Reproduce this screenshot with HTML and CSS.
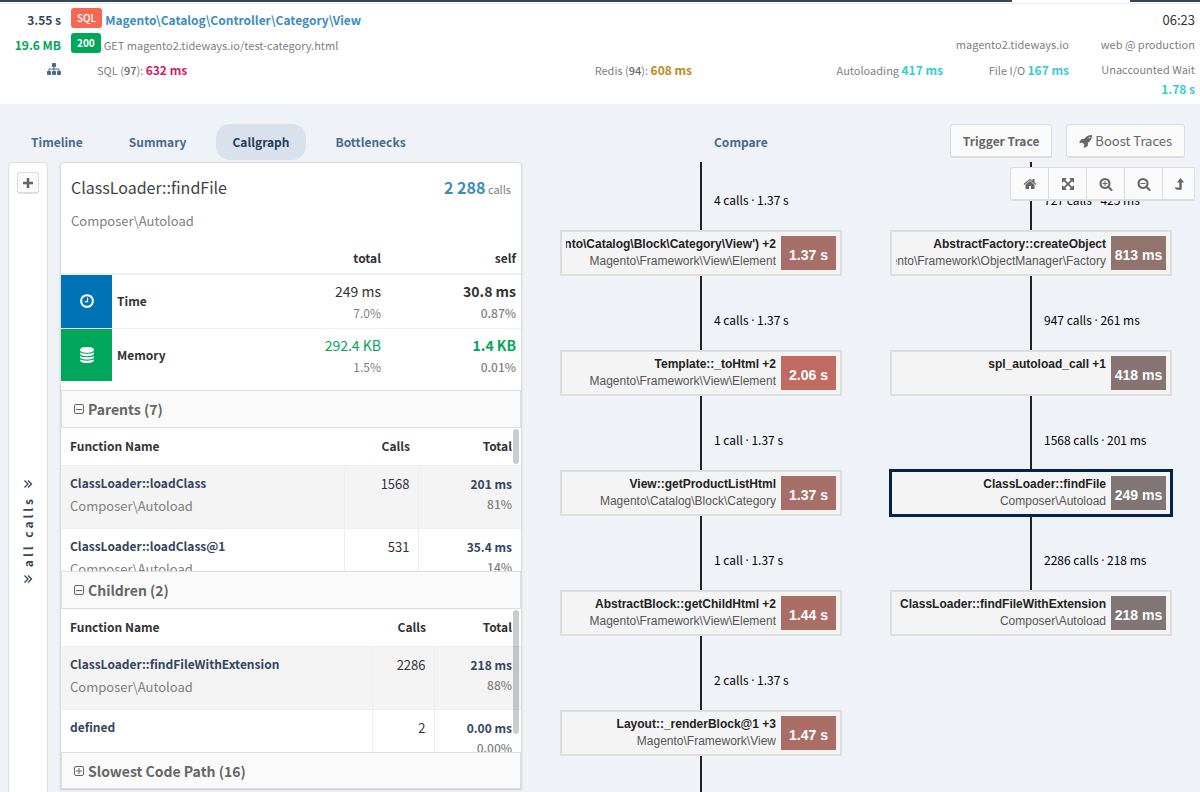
FILE: index.html
```html
<!DOCTYPE html>
<html lang="en">
<head>
<meta charset="utf-8">
<title>Callgraph - Magento\Catalog\Controller\Category\View</title>
<link rel="stylesheet" href="styles.css">
</head>
<body>
<svg class="sprite" aria-hidden="true">
  <symbol id="i-home" viewBox="0 0 1792 1792"><path d="M1472 992v480q0 26-19 45t-45 19h-384v-384h-256v384h-384q-26 0-45-19t-19-45v-480q0-1 .5-3t.5-3l575-474 575 474q1 2 1 6zm223-69l-62 74q-8 9-21 11h-3q-13 0-21-7l-692-577-692 577q-12 8-24 7-13-2-21-11l-62-74q-8-10-7-23.5t11-21.5l719-599q32-26 76-26t76 26l244 204v-195q0-14 9-23t23-9h192q14 0 23 9t9 23v408l219 182q10 8 11 21.5t-7 23.5z"/></symbol>
  <symbol id="i-expand" viewBox="0 0 1792 1792"><path d="M1411 541l-355 355 355 355 144-144q29-31 70-14 39 17 39 59v448q0 26-19 45t-45 19h-448q-42 0-59-40-17-39 14-69l144-144-355-355-355 355 144 144q31 30 14 69-17 40-59 40h-448q-26 0-45-19t-19-45v-448q0-42 40-59 39-17 69 14l144 144 355-355-355-355-144 144q-19 19-45 19-12 0-24-5-40-17-40-59v-448q0-26 19-45t45-19h448q42 0 59 40 17 39-14 69l-144 144 355 355 355-355-144-144q-31-30-14-69 17-40 59-40h448q26 0 45 19t19 45v448q0 42-39 59-13 5-25 5-26 0-45-19z"/></symbol>
  <symbol id="i-zoomin" viewBox="0 0 1792 1792"><path d="M1088 800v64q0 13-9.5 22.5t-22.5 9.5h-224v224q0 13-9.5 22.5t-22.5 9.5h-64q-13 0-22.5-9.5t-9.5-22.5v-224h-224q-13 0-22.5-9.5t-9.5-22.5v-64q0-13 9.5-22.5t22.5-9.5h224v-224q0-13 9.5-22.5t22.5-9.5h64q13 0 22.5 9.5t9.5 22.5v224h224q13 0 22.5 9.5t9.5 22.5zm128 32q0-185-131.5-316.5t-316.5-131.5-316.5 131.5-131.5 316.5 131.5 316.5 316.5 131.5 316.5-131.5 131.5-316.5zm512 832q0 53-37.5 90.5t-90.5 37.5q-54 0-90-38l-343-342q-179 124-399 124-143 0-273.5-55.5t-225-150-150-225-55.5-273.5 55.5-273.5 150-225 225-150 273.5-55.5 273.5 55.5 225 150 150 225 55.5 273.5q0 220-124 399l343 343q37 37 37 90z"/></symbol>
  <symbol id="i-zoomout" viewBox="0 0 1792 1792"><path d="M1088 800v64q0 13-9.5 22.5t-22.5 9.5h-576q-13 0-22.5-9.5t-9.5-22.5v-64q0-13 9.5-22.5t22.5-9.5h576q13 0 22.5 9.5t9.5 22.5zm128 32q0-185-131.5-316.5t-316.5-131.5-316.5 131.5-131.5 316.5 131.5 316.5 316.5 131.5 316.5-131.5 131.5-316.5zm512 832q0 53-37.5 90.5t-90.5 37.5q-54 0-90-38l-343-342q-179 124-399 124-143 0-273.5-55.5t-225-150-150-225-55.5-273.5 55.5-273.5 150-225 225-150 273.5-55.5 273.5 55.5 225 150 150 225 55.5 273.5q0 220-124 399l343 343q37 37 37 90z"/></symbol>
  <symbol id="i-levelup" viewBox="0 0 14 14"><path d="M8.500 1 12.200 5.400H9.700v7.400H4.400L2.600 10.600h4.700V5.400H4.800z"/></symbol>
  <symbol id="i-rocket" viewBox="0 0 1792 1792"><path d="M1440 448q0-40-28-68t-68-28-68 28-28 68 28 68 68 28 68-28 28-68zm224-288q0 249-75.5 430.5t-253.5 360.5q-81 80-195 176l-20 379q-2 16-16 26l-384 224q-7 4-16 4-12 0-23-9l-64-64q-13-14-8-32l85-276-281-281-276 85q-3 1-9 1-14 0-23-9l-64-64q-17-19-5-39l224-384q10-14 26-16l379-20q96-114 176-195 188-187 358-258t431-71q14 0 24 9.5t10 22.5z"/></symbol>
  <symbol id="i-sitemap" viewBox="0 0 1792 1792"><path d="M1792 1248v320q0 40-28 68t-68 28h-320q-40 0-68-28t-28-68v-320q0-40 28-68t68-28h96v-192h-512v192h96q40 0 68 28t28 68v320q0 40-28 68t-68 28h-320q-40 0-68-28t-28-68v-320q0-40 28-68t68-28h96v-192h-512v192h96q40 0 68 28t28 68v320q0 40-28 68t-68 28h-320q-40 0-68-28t-28-68v-320q0-40 28-68t68-28h96v-192q0-52 38-90t90-38h512v-192h-96q-40 0-68-28t-28-68v-320q0-40 28-68t68-28h320q40 0 68 28t28 68v320q0 40-28 68t-68 28h-96v192h512q52 0 90 38t38 90v192h96q40 0 68 28t28 68z"/></symbol>
  <symbol id="i-clock" viewBox="0 0 1792 1792"><path d="M1024 544v448q0 14-9 23t-23 9h-320q-14 0-23-9t-9-23v-64q0-14 9-23t23-9h224v-352q0-14 9-23t23-9h64q14 0 23 9t9 23zm416 352q0-148-73-273t-198-198-273-73-273 73-198 198-73 273 73 273 198 198 273 73 273-73 198-198 73-273zm224 0q0 209-103 385.5t-279.5 279.5-385.5 103-385.5-103-279.5-279.5-103-385.5 103-385.5 279.5-279.5 385.5-103 385.5 103 279.5 279.5 103 385.5z"/></symbol>
  <symbol id="i-database" viewBox="0 0 1792 1792"><path d="M896 768q237 0 443-43t325-127v170q0 69-103 128t-280 93.5-385 34.5-385-34.5-280-93.5-103-128v-170q119 84 325 127t443 43zm0 768q237 0 443-43t325-127v170q0 69-103 128t-280 93.5-385 34.5-385-34.5-280-93.5-103-128v-170q119 84 325 127t443 43zm0-384q237 0 443-43t325-127v170q0 69-103 128t-280 93.5-385 34.5-385-34.5-280-93.5-103-128v-170q119 84 325 127t443 43zm0-1152q208 0 385 34.5t280 93.5 103 128v128q0 69-103 128t-280 93.5-385 34.5-385-34.5-280-93.5-103-128v-128q0-69 103-128t280-93.5 385-34.5z"/></symbol>
  <symbol id="i-plus" viewBox="0 0 12 12"><path d="M4.700 1h2.600v3.700H11v2.600H7.300V11H4.700V7.300H1V4.700h3.700z"/></symbol>
  <symbol id="i-chevrons" viewBox="0 0 10 10"><path d="M1.500 1.500 5 5 1.500 8.500M5 1.500 8.500 5 5 8.500" fill="none" stroke="currentColor" stroke-width="1.300"/></symbol>
  <symbol id="i-minusbox" viewBox="0 0 10 10"><path d="M2 .5h6Q9.500.5 9.500 2v6Q9.500 9.500 8 9.500H2Q.5 9.500.5 8V2Q.5.5 2 .5zM2 5.500h6" fill="none" stroke="currentColor"/></symbol>
  <symbol id="i-plusbox" viewBox="0 0 10 10"><path d="M2 .5h6Q9.500.5 9.500 2v6Q9.500 9.500 8 9.500H2Q.5 9.500.5 8V2Q.5.5 2 .5zM2 5h6M5 2v6" fill="none" stroke="currentColor"/></symbol>
</svg>

<div class="topbar"><span class="topbar-dark"></span><span class="topbar-gap"></span><span class="topbar-end"></span></div>
<header class="trace">
  <div class="cell num">3.55 s</div>
  <div class="cell"><span class="tag tag-sql">SQL</span><a class="trace-title" href="#">Magento\Catalog\Controller\Category\View</a></div>
  <div></div>
  <div class="cell right clock">06:23</div>

  <div class="cell num green">19.6 MB</div>
  <div class="cell"><span class="tag tag-ok">200</span><span class="small">GET magento2.tideways.io/test-category.html</span></div>
  <div class="cell right small">magento2.tideways.io</div>
  <div class="cell right small">web @ production</div>

  <div class="cell num"><svg class="icon sitemap"><use href="#i-sitemap"/></svg></div>
  <div class="metrics">
    <div class="small">SQL (<b>97</b>): <strong class="pink">632 ms</strong></div>
    <div class="metrics-rest">
      <div class="small">Redis (<b>94</b>): <strong class="gold">608 ms</strong></div>
      <div class="small">Autoloading <strong class="teal">417 ms</strong></div>
    </div>
  </div>
  <div class="cell right small">File I/O <strong class="teal">167 ms</strong></div>
  <div class="cell right small wait">Unaccounted Wait <strong class="teal">1.78 s</strong></div>
</header>

<div class="tabbar">
  <nav class="tabs">
    <a class="tab" href="#">Timeline</a>
    <a class="tab" href="#">Summary</a>
    <a class="tab active" href="#">Callgraph</a>
    <a class="tab" href="#">Bottlenecks</a>
  </nav>
  <div class="tab-actions">
    <a class="tab" href="#">Compare</a>
    <div class="buttons">
      <button class="btn strong">Trigger Trace</button>
      <button class="btn"><svg class="icon"><use href="#i-rocket"/></svg>Boost Traces</button>
    </div>
  </div>
</div>

<main class="content">
  <aside class="rail">
    <button class="rail-add" aria-label="Add"><svg><use href="#i-plus"/></svg></button>
    <div class="rail-label">
      <svg><use href="#i-chevrons"/></svg>
      <span>all calls</span>
      <svg><use href="#i-chevrons"/></svg>
    </div>
  </aside>

  <section class="panel">
    <div class="panel-head">
      <h1>ClassLoader::findFile</h1>
      <div class="count"><strong>2 288</strong> calls</div>
    </div>
    <div class="namespace">Composer\Autoload</div>
    <table class="totals">
      <thead><tr><th></th><th></th><th>total</th><th>self</th></tr></thead>
      <tbody>
        <tr><td class="tile blue"><svg><use href="#i-clock"/></svg></td><th scope="row">Time</th><td>249 ms<small>7.0%</small></td><td class="self">30.8 ms<small>0.87%</small></td></tr>
        <tr class="mem"><td class="tile greenbg"><svg><use href="#i-database"/></svg></td><th scope="row">Memory</th><td>292.4 KB<small>1.5%</small></td><td class="self">1.4 KB<small>0.01%</small></td></tr>
      </tbody>
    </table>

    <h2><svg><use href="#i-minusbox"/></svg>Parents (7)</h2>
    <div class="list">
      <table class="calls parents">
        <thead><tr><th>Function Name</th><th>Calls</th><th>Total</th></tr></thead>
        <tbody>
          <tr><td><a href="#">ClassLoader::loadClass</a><span>Composer\Autoload</span></td><td>1568</td><td><b>201 ms</b><small>81%</small></td></tr>
          <tr><td><a href="#">ClassLoader::loadClass@1</a><span>Composer\Autoload</span></td><td>531</td><td><b>35.4 ms</b><small>14%</small></td></tr>
        </tbody>
      </table>
      <i class="thumb thumb-short"></i>
    </div>

    <h2><svg><use href="#i-minusbox"/></svg>Children (2)</h2>
    <div class="list">
      <table class="calls children">
        <thead><tr><th>Function Name</th><th>Calls</th><th>Total</th></tr></thead>
        <tbody>
          <tr><td><a href="#">ClassLoader::findFileWithExtension</a><span>Composer\Autoload</span></td><td>2286</td><td><b>218 ms</b><small>88%</small></td></tr>
          <tr><td><a href="#">defined</a></td><td>2</td><td><b>0.00 ms</b><small>0.00%</small></td></tr>
        </tbody>
      </table>
      <i class="thumb thumb-long"></i>
    </div>

    <h2 class="last"><svg><use href="#i-plusbox"/></svg>Slowest Code Path (16)</h2>
  </section>

  <section class="graph">
    <div class="lane">
      <div class="edge first">4 calls <i>·</i> 1.37 s</div>
      <div class="node"><div class="fn"><b>Block\Magento\Catalog\Block\Category\View') +2</b><span>Magento\Framework\View\Element</span></div><em class="h3">1.37 s</em></div>
      <div class="edge">4 calls <i>·</i> 1.37 s</div>
      <div class="node"><div class="fn"><b>Template::_toHtml +2</b><span>Magento\Framework\View\Element</span></div><em class="h5">2.06 s</em></div>
      <div class="edge">1 call <i>·</i> 1.37 s</div>
      <div class="node"><div class="fn"><b>View::getProductListHtml</b><span>Magento\Catalog\Block\Category</span></div><em class="h3">1.37 s</em></div>
      <div class="edge">1 call <i>·</i> 1.37 s</div>
      <div class="node"><div class="fn"><b>AbstractBlock::getChildHtml +2</b><span>Magento\Framework\View\Element</span></div><em class="h4">1.44 s</em></div>
      <div class="edge">2 calls <i>·</i> 1.37 s</div>
      <div class="node"><div class="fn"><b>Layout::_renderBlock@1 +3</b><span>Magento\Framework\View</span></div><em class="h4">1.47 s</em></div>
      <div class="edge"></div>
    </div>
    <div class="lane">
      <div class="edge first">727 calls <i>·</i> 425 ms</div>
      <div class="node"><div class="fn"><b>AbstractFactory::createObject</b><span>Magento\Framework\ObjectManager\Factory</span></div><em class="h2">813 ms</em></div>
      <div class="edge">947 calls <i>·</i> 261 ms</div>
      <div class="node"><div class="fn"><b>spl_autoload_call +1</b></div><em class="h1">418 ms</em></div>
      <div class="edge">1568 calls <i>·</i> 201 ms</div>
      <div class="node selected"><div class="fn"><b>ClassLoader::findFile</b><span>Composer\Autoload</span></div><em class="h0">249 ms</em></div>
      <div class="edge">2286 calls <i>·</i> 218 ms</div>
      <div class="node"><div class="fn"><b>ClassLoader::findFileWithExtension</b><span>Composer\Autoload</span></div><em class="h0">218 ms</em></div>
    </div>
    <div class="toolbar">
      <button aria-label="Home"><svg><use href="#i-home"/></svg></button>
      <button aria-label="Fit"><svg><use href="#i-expand"/></svg></button>
      <button aria-label="Zoom in"><svg><use href="#i-zoomin"/></svg></button>
      <button aria-label="Zoom out"><svg><use href="#i-zoomout"/></svg></button>
      <button aria-label="Up"><svg><use href="#i-levelup"/></svg></button>
    </div>
  </section>
</main>
</body>
</html>
```
FILE: styles.css
```css
* { box-sizing: border-box; }
body {
  margin: 0;
  height: 100vh;
  overflow: hidden;
  display: flex;
  flex-direction: column;
  background: #eff3f8;
  color: #333;
  font: 13px/20px "Noto Sans CJK SC", "Noto Sans", sans-serif;
}
a { color: inherit; text-decoration: none; }
svg { fill: currentColor; display: block; }
button { font: inherit; color: inherit; }
h1, h2 { margin: 0; font-weight: 400; }
.sprite { position: absolute; width: 0; height: 0; }

.topbar { display: flex; height: 4px; flex: none; background: #fff; border-bottom: 1px solid #eee; }
.topbar span { height: 2px; }
.topbar-dark { flex: 1; background: #34455e; }
.topbar-gap { width: 118px; }
.topbar-end { width: 70px; background: #34455e; }

.trace {
  flex: none;
  display: grid;
  grid-template-columns: 61px minmax(0, 1fr) 126px 126px;
  grid-template-rows: 25px 25px auto;
  padding: 3px 5px 5px 0;
  background: #fff;
}
.cell { line-height: 25px; white-space: nowrap; }
.cell:nth-child(4n + 2), .metrics { padding-left: 10px; }
.num { font-size: 12px; font-weight: 700; text-align: right; color: #34455e; }
.green { color: #00a65a; }
.right { text-align: right; }
.small { font-size: 11px; color: #808080; white-space: nowrap; }
.small strong { font-size: 12px; }
.small b { font-weight: 500; color: #666; }
.clock { color: #333; }
.wait { line-height: 20px; padding-top: 2px; white-space: normal; }
.wait strong { display: block; }
.sitemap { width: 14px; height: 14px; margin: 5px 0 0 auto; color: #486b8f; }
.tag {
  display: inline-block;
  padding: 0 6px;
  line-height: 20px;
  margin: 1px 3px 0 0;
  border-radius: 3px;
  color: #fff;
  font-size: 10px;
  font-weight: 500;
  vertical-align: top;
}
.tag-sql { background: #f56954; }
.tag-ok { background: #00a65a; font-weight: 700; }
.trace-title { font-size: 12px; font-weight: 700; color: #3c8dbc; }
.metrics { display: grid; grid-template-columns: 10fr 7fr; padding-left: 36px; line-height: 25px; }
.metrics-rest { display: flex; justify-content: space-between; }
.small .pink { color: #d81b60; }
.small .gold { color: #c0891a; }
.small .teal { color: #39cccc; }

.tabbar { flex: none; display: grid; grid-template-columns: 58% 1fr; padding: 20px 0 2px; }
.tabs, .tab-actions, .buttons { display: flex; gap: 14px; }
.tabs { padding-left: 15px; }
.tab-actions { justify-content: space-between; padding: 0 15px 0 2px; }
.tab { padding: 0 16px; line-height: 36px; border-radius: 14px; font-size: 12px; font-weight: 700; color: #486b8f; }
.tab.active { background: #d9e1ec; color: #1f3c5c; }
.btn {
  display: flex;
  align-items: center;
  gap: 2px;
  height: 34px;
  padding: 0 12px;
  border: 1px solid #ddd;
  border-bottom-width: 2px;
  border-radius: 3px;
  background: #fafafa;
  color: #666;
}
.btn.strong { font-size: 12px; font-weight: 700; }
.btn .icon { width: 14px; height: 14px; }

.content { flex: 1; min-height: 0; display: flex; }
.rail {
  flex: none;
  width: 40px;
  margin: 0 12px 0 8px;
  display: flex;
  flex-direction: column;
  align-items: center;
  background: #fff;
  border: 1px solid #ddd;
  border-bottom: 0;
  border-radius: 4px 4px 0 0;
}
.rail-add {
  display: grid;
  place-items: center;
  width: 22px;
  height: 22px;
  margin-top: 9px;
  padding: 0;
  border: 1px solid #ddd;
  border-bottom-width: 2px;
  border-radius: 3px;
  background: #fafafa;
  color: #666;
}
.rail-add svg { width: 12px; height: 12px; }
.rail-label { display: flex; flex-direction: column; align-items: center; gap: 7px; margin-top: 285px; color: #34455e; }
.rail-label svg { width: 10px; height: 10px; }
.rail-label span { writing-mode: vertical-rl; transform: rotate(180deg); letter-spacing: 3px; font-size: 12px; font-weight: 700; }

.panel {
  flex: none;
  width: 462px;
  align-self: flex-start;
  background: #fff;
  border: 1px solid #ddd;
  border-radius: 4px 4px 0 0;
  box-shadow: 0 1px 2px #ccc;
}
.panel-head { display: flex; justify-content: space-between; align-items: baseline; padding: 9px 10px 0; line-height: 30px; }
h1 { font-size: 16px; line-height: 30px; color: #444; }
.count { font-size: 11px; color: #808080; }
.count strong { font-size: 16px; font-weight: 700; color: #3c8dbc; }
.namespace { padding: 7px 10px 0; color: #808080; }
table { border-collapse: collapse; width: 100%; table-layout: fixed; }
th, td { padding: 0; text-align: right; font-weight: 400; vertical-align: top; }
small { display: block; font-size: 12px; color: #808080; }

.totals { margin-bottom: 9px; }
.totals th { font-size: 12px; font-weight: 700; }
.totals thead th { height: 43px; padding: 17px 5px 0 0; border-bottom: 2px solid #eee; }
.totals thead th:nth-child(1) { width: 51px; }
.totals thead th:nth-child(3) { width: 136px; }
.totals thead th:nth-child(4) { width: 135px; }
.totals tbody tr { height: 54px; border-bottom: 1px solid #eee; }
.totals tbody tr.mem { border-bottom: 0; height: 53px; }
.totals tbody td { padding: 6px 5px 0 0; font-size: 14px; }
.totals tbody small { line-height: 23px; }
.totals tbody th { text-align: left; padding-left: 5px; vertical-align: middle; }
.totals .self { font-weight: 700; }
.totals .self small { font-weight: 500; }
.totals .mem td { color: #00a65a; }
.totals .tile { padding: 0; vertical-align: middle; background-clip: padding-box; }
.totals tbody tr .tile { color: #fff; }
.tile svg { width: 16px; height: 16px; margin: 0 auto; }
.blue { background: #0073b7; }
.greenbg { background: #00a65a; }

h2 {
  display: flex;
  align-items: center;
  gap: 4px;
  height: 38px;
  padding-left: 12px;
  border: 1px solid #ddd;
  background: #fafafa;
  color: #666;
  font-size: 14px;
  font-weight: 700;
}
h2.last { height: 36px; border-bottom: 0; }
h2 svg { width: 10px; height: 10px; }
.list { position: relative; height: 143px; overflow: hidden; }
.thumb { position: absolute; top: 1px; right: 2px; width: 6px; border-radius: 3px; background: #0003; }
.thumb-short { height: 35px; }
.thumb-long { height: 124px; }
.calls th { height: 37px; padding: 8px 8px 0; font-size: 12px; font-weight: 700; }
.calls th:first-child, .calls td:first-child { text-align: left; padding-left: 9px; }
.calls th:last-child, .calls td:last-child { padding-right: 9px; }
.calls tbody tr { height: 63px; border-top: 1px solid #eee; }
.calls tbody tr:first-child { background: #f4f4f4; }
.calls td { padding: 8px 8px 0; border-left: 1px solid #eee; }
.calls td:first-child { padding-top: 7px; border-left: 0; }
.calls td a, .calls td b { display: block; font-size: 12px; font-weight: 700; color: #34455e; }
.calls td small { font-weight: 500; }
.calls td span { display: block; padding-top: 3px; color: #808080; }
.calls th:nth-child(3) { width: 103px; }
.calls th:nth-child(2) { width: 74px; }
.children th:nth-child(3) { width: 87px; }
.children th:nth-child(2) { width: 62px; }

.graph { position: relative; flex: 1; min-width: 0; display: flex; gap: 48px; padding-left: 38px; overflow: hidden; }
.lane { flex: none; width: 282px; }
.edge {
  height: 74px;
  margin-left: 140px;
  padding: 34px 0 0 12px;
  border-left: 2px solid #222;
  font-size: 12px;
  color: #000;
}
.edge i { font-family: "Open Sans", sans-serif; font-style: normal; }
.edge.first { height: 68px; padding-top: 28px; }
.node {
  display: flex;
  height: 46px;
  padding: 4px;
  border: 2px solid #ddd;
  background: #f4f4f4;
  font: 12px/17px "Liberation Sans", Arial, sans-serif;
}
.node.selected { border-color: #02244a; outline: 1px solid #02244a; }
.fn { flex: 1; min-width: 0; display: flex; flex-direction: column; align-items: flex-end; overflow: hidden; white-space: nowrap; margin-right: 5px; }
.fn b { color: #222; }
.fn span { color: #555; }
.node em { flex: none; width: 55px; height: 34px; font: bold 14px/38px "Liberation Sans", Arial, sans-serif; text-align: center; color: #fff; }
.h0 { background: #807676; }
.h1 { background: #867472; }
.h2 { background: #92746e; }
.h3 { background: #a76f67; }
.h4 { background: #aa6e66; }
.h5 { background: #c06a60; }

.toolbar { position: absolute; top: 5px; right: 5px; display: flex; height: 34px; border: 1px solid #ddd; border-bottom-width: 2px; border-right: 0; border-radius: 3px; background: #fafafa; overflow: hidden; }
.toolbar button { display: grid; place-items: center; width: 38px; padding: 0; border: 0; border-right: 1px solid #ddd; background: none; color: #666; }
.toolbar button:last-child { width: 32px; }
.toolbar svg { width: 14px; height: 14px; }
```
